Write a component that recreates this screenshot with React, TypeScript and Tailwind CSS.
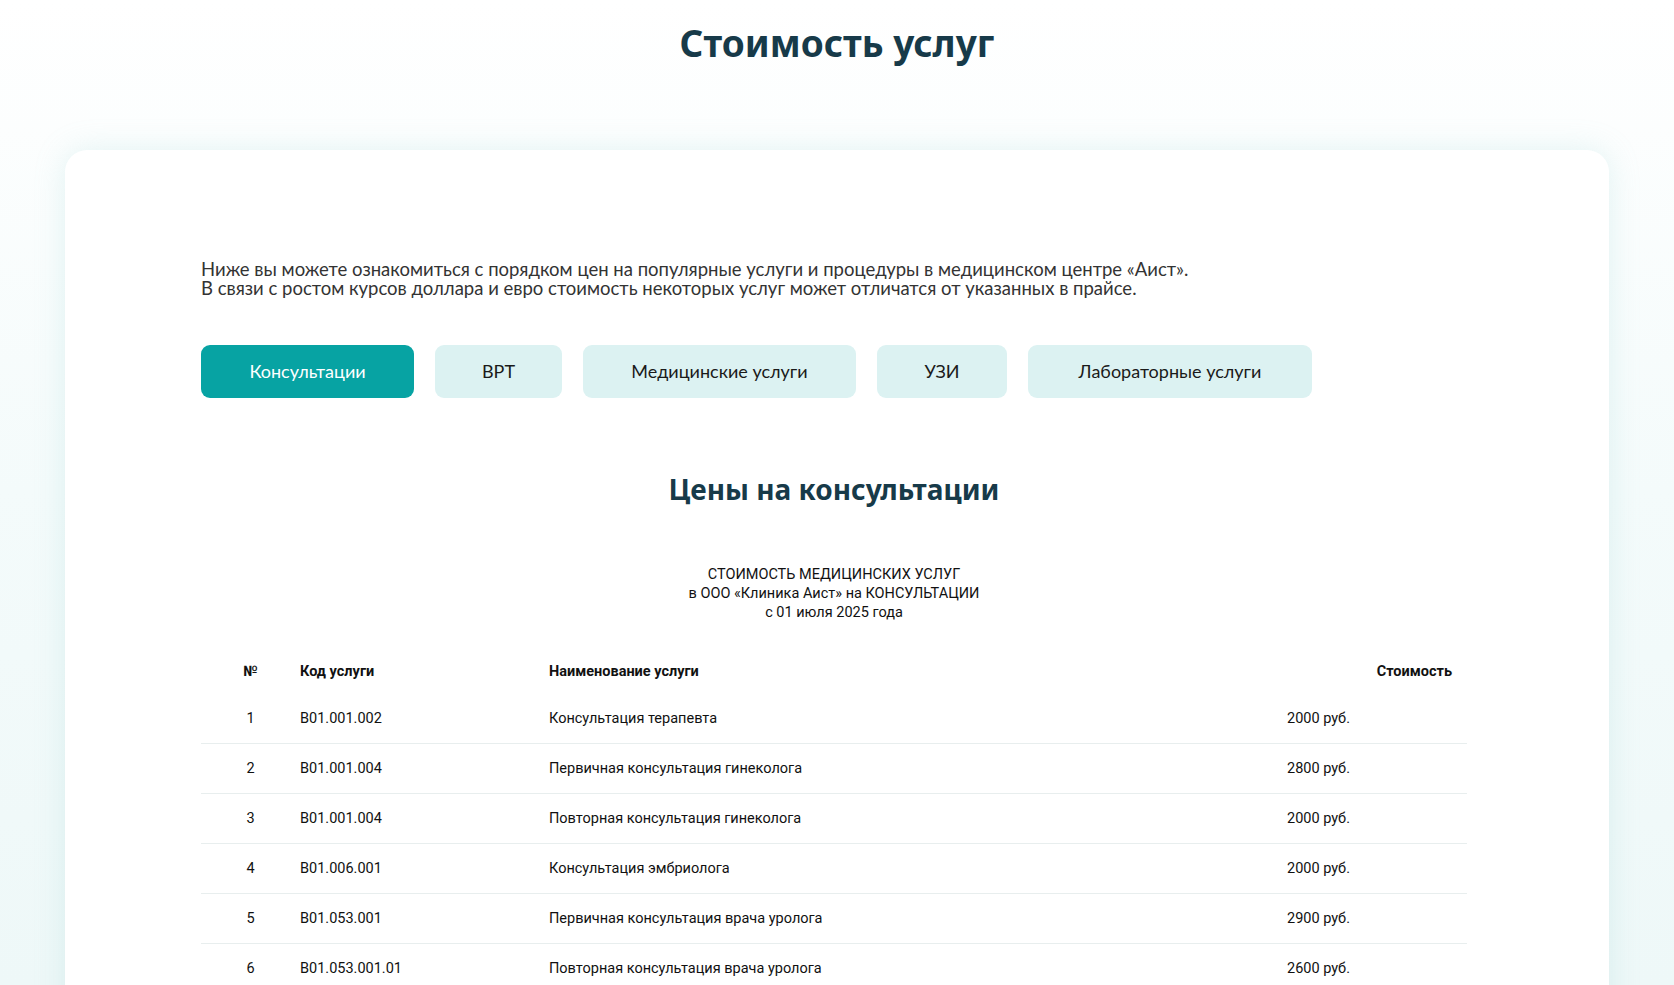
const tabs = ["Консультации", "ВРТ", "Медицинские услуги", "УЗИ", "Лабораторные услуги"];
const tabW = ["w-[213px]", "w-[127px]", "w-[273px]", "w-[130px]", "w-[284px]"];

const rows = [
  ["1", "B01.001.002", "Консультация терапевта", "2000 руб."],
  ["2", "B01.001.004", "Первичная консультация гинеколога", "2800 руб."],
  ["3", "B01.001.004", "Повторная консультация гинеколога", "2000 руб."],
  ["4", "B01.006.001", "Консультация эмбриолога", "2000 руб."],
  ["5", "B01.053.001", "Первичная консультация врача уролога", "2900 руб."],
  ["6", "B01.053.001.01", "Повторная консультация врача уролога", "2600 руб."],
];

export default function App() {
  return (
    <div className="w-full h-[985px] overflow-hidden bg-gradient-to-b from-white via-[#f4fbfb] to-[#eef8f8]" style={{ fontFamily: "Lato, 'Open Sans', sans-serif" }}>
      <h1 className="pt-[18px] text-center text-[37px] font-bold text-[#173a49] leading-[50px]" style={{ fontFamily: "'Noto Sans', sans-serif" }}>
        Стоимость услуг
      </h1>

      <div className="mx-[65px] mt-[82px] h-[900px] rounded-[22px] bg-white shadow-[0_0_30px_rgba(150,210,210,0.25)] pl-[136px] pr-[142px] pt-[110px]">
        <p className="text-[18.5px] leading-[19px] text-[#333]">
          Ниже вы можете ознакомиться с порядком цен на популярные услуги и процедуры в медицинском центре «Аист».
          <br />
          В связи с ростом курсов доллара и евро стоимость некоторых услуг может отличатся от указанных в прайсе.
        </p>

        <div className="mt-[47px] flex gap-[21px]">
          {tabs.map((t, i) => (
            <button
              key={t}
              className={`${tabW[i]} h-[53px] rounded-[9px] text-[18px] ${i === 0 ? "bg-[#07a3a3] text-white" : "bg-[#dcf2f2] text-[#1a1a1a]"}`}
            >
              {t}
            </button>
          ))}
        </div>

        <h2 className="mt-[70px] text-center text-[28px] font-bold text-[#173a49]" style={{ fontFamily: "'Noto Sans', sans-serif" }}>
          Цены на консультации
        </h2>

        <div className="mt-[55px] text-[#111]" style={{ fontFamily: "Roboto, sans-serif" }}>
          <div className="text-center text-[14.5px] leading-[19px]">
            <div>СТОИМОСТЬ МЕДИЦИНСКИХ УСЛУГ</div>
            <div>в ООО «Клиника Аист» на КОНСУЛЬТАЦИИ</div>
            <div>с 01 июля 2025 года</div>
          </div>

          <div className="mt-[28px] grid grid-cols-[99px_249px_1fr_200px] h-[44px] items-center text-[14.5px] font-bold">
            <div className="text-center">№</div>
            <div>Код услуги</div>
            <div>Наименование услуги</div>
            <div className="text-right pr-[15px]">Стоимость</div>
          </div>

          {rows.map((r, i) => (
            <div
              key={i}
              className={`grid grid-cols-[99px_249px_1fr_200px] h-[50px] items-center text-[14.5px] ${i < rows.length - 1 ? "border-b border-[#e8eeee]" : ""}`}
            >
              <div className="text-center">{r[0]}</div>
              <div>{r[1]}</div>
              <div>{r[2]}</div>
              <div className="pl-[20px]">{r[3]}</div>
            </div>
          ))}
        </div>
      </div>
    </div>
  );
}
